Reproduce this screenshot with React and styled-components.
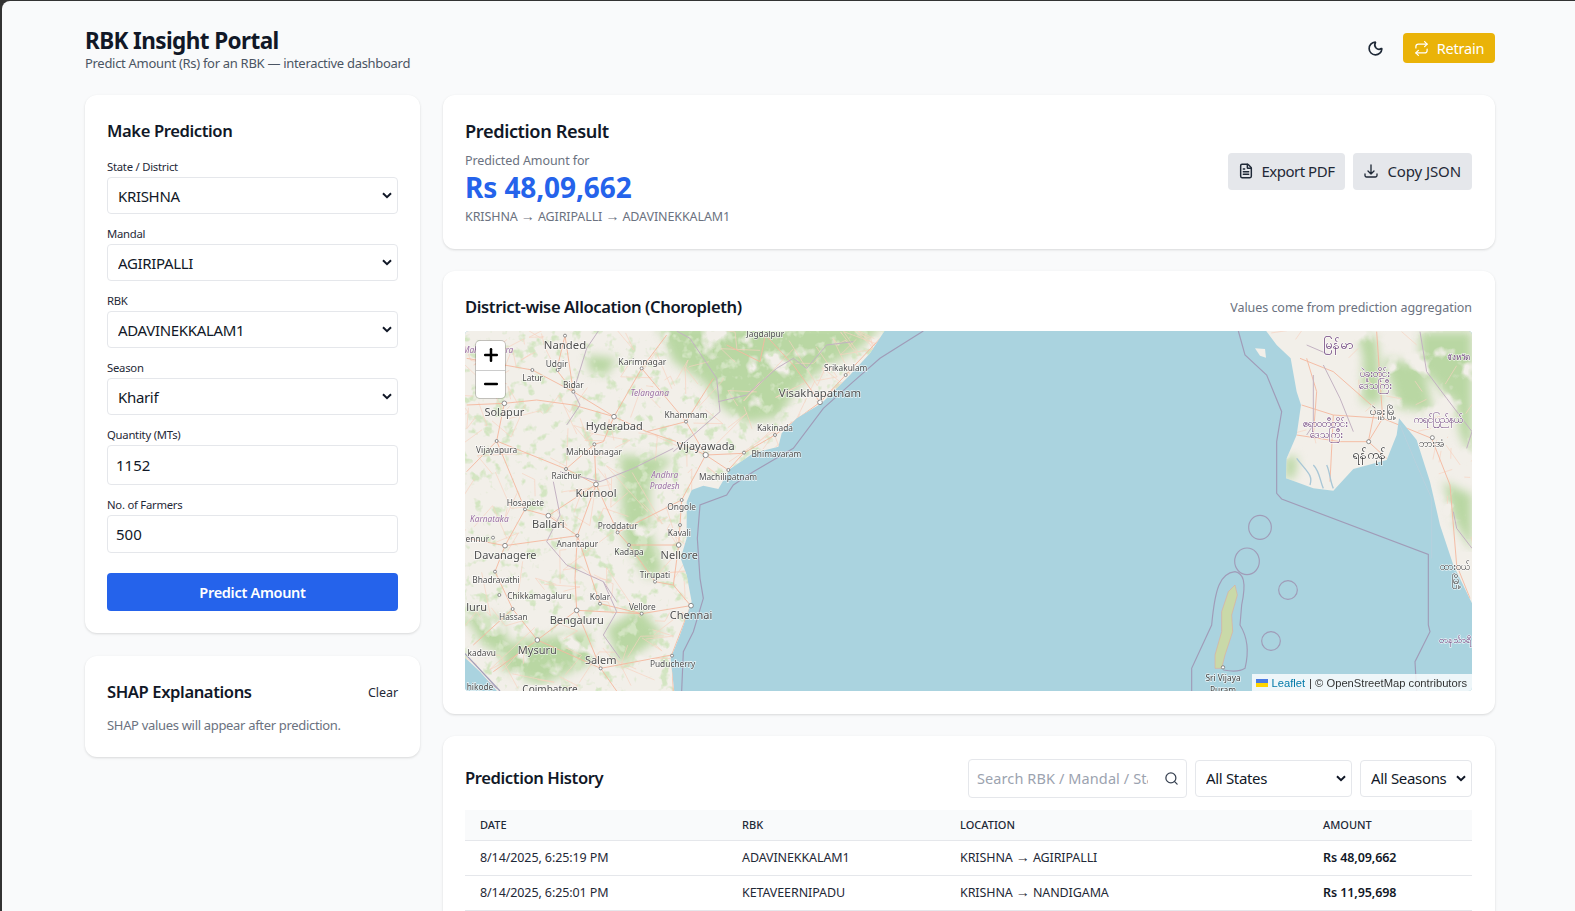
import React from "react";
import styled, { createGlobalStyle } from "styled-components";
import { Moon, FileText, Search, Plus, Minus } from "lucide-react";
import { HiOutlineArrowDownTray } from "react-icons/hi2";
import { FiRepeat } from "react-icons/fi";

const Global = createGlobalStyle`
  html, body { margin: 0; height: 911px; overflow: hidden; background: #333; }
  * { box-sizing: border-box; }
  body { font-family: "Noto Sans", "Open Sans", sans-serif; color: #111827; }
`;
const Page = styled.div`
  margin: 1px 0 0 2px; height: 910px; overflow: hidden; background: #f9fafb;
  border-top-left-radius: 8px; padding: 0 80px 0 83px;
`;
const Header = styled.header`
  height: 94px; display: flex; align-items: flex-start; justify-content: space-between; padding-top: 25px;
`;
const Title = styled.h1`
  margin: 0; font-size: 22.5px; line-height: 29px; font-weight: 700; letter-spacing: -0.6px;
`;
const Subtitle = styled.p`
  margin: 0; font-size: 13px; line-height: 17px; color: #4b5563; letter-spacing: -0.3px;
`;
const HeaderActions = styled.div`
  display: flex; align-items: center; gap: 19px; padding-top: 7px;
  svg { display: block; }
`;
const RetrainButton = styled.button`
  display: flex; align-items: center; justify-content: center; gap: 8px; width: 92px; height: 30px; padding: 0;
  border: 0; border-radius: 4px; background: #eab308; color: #fff; font: 14.5px "Noto Sans", sans-serif; letter-spacing: -0.2px;
`;
const Columns = styled.div`display: grid; grid-template-columns: 335px 1fr; column-gap: 23px; align-items: start;`;
const Stack = styled.div`display: flex; flex-direction: column; gap: ${p => p.$gap}px;`;
const Card = styled.section`
  background: #fff; border-radius: 12px; box-shadow: 0 1px 3px rgba(0,0,0,.1), 0 1px 2px rgba(0,0,0,.04); padding: 22px;
`;
const WideCard = styled(Card)`padding-right: 23px;`;
const CardTitle = styled.h2`
  margin: 0 0 1px; font-size: ${p => p.$large ? "18.2px" : "16.6px"}; line-height: 27px; font-weight: 600;
  letter-spacing: -0.4px; color: #111827;
`;
const Form = styled.form`margin-top: 14px;`;
const Field = styled.div`margin-bottom: 11px;`;
const Label = styled.label`
  display: block; font-size: 11.3px; line-height: 18px; padding-bottom: 1px; color: #1f2937; letter-spacing: -0.25px;
`;
const chevron = "data:image/svg+xml,%3Csvg xmlns='http://www.w3.org/2000/svg' width='10' height='7' viewBox='0 0 10 7'%3E%3Cpath d='M1 1.2l4 4 4-4' fill='none' stroke='%23111827' stroke-width='2'/%3E%3C/svg%3E";
const Select = styled.select`
  display: block; width: ${p => p.$w || "100%"}; height: 37px; padding: 0 20px 0 10px; border: 1px solid #e5e7eb; border-radius: 4px;
  appearance: none; background: #fff url("${chevron}") no-repeat right 5px center;
  color: #111827; font: 15px "Noto Sans", sans-serif; letter-spacing: -0.33px;
`;
const Input = styled.input`
  display: block; width: 100%; height: ${p => p.$h}px; padding: 0 8px; border: 1px solid #e5e7eb; border-radius: 4px;
  background: #fff; color: #111827; font: 15px "Noto Sans", sans-serif;
`;
const PrimaryButton = styled.button`
  display: block; width: 100%; height: 38px; margin-top: 20px; border: 0; border-radius: 4px; background: #2563eb;
  color: #fff; font: 600 14.5px "Noto Sans", sans-serif; letter-spacing: -0.3px;
`;
const SpacedHead = styled.div`display: flex; align-items: center; justify-content: space-between;`;
const ClearLink = styled.span`font-size: 12.5px; color: #1f2937; letter-spacing: -0.05px;`;
const Muted = styled.p`margin: 10px 0 1px; font-size: 13px; line-height: 18px; color: #6b7280; letter-spacing: -0.32px;`;
const ResultRow = styled.div`display: flex; align-items: center; justify-content: space-between; height: 110px;`;
const SmallGray = styled.div`font-size: 12.5px; line-height: 18px; color: #6b7280; letter-spacing: -0.1px; margin-top: ${p => p.$mt || 0}px;`;
const Arrow = styled.span`font-family: "Liberation Sans", sans-serif; font-size: 14px; line-height: 0;`;
const Amount = styled.div`font-size: 28px; line-height: 34px; font-weight: 700; color: #2563eb; letter-spacing: -0.1px;`;
const Buttons = styled.div`display: flex; gap: 8px; margin-bottom: 2px;`;
const GrayButton = styled.button`
  display: flex; align-items: center; gap: 8px; height: 37px; padding: 0 11px 0 10px; border: 0; border-radius: 4px; background: #e5e7eb;
  color: #1f2937; font: 15px "Noto Sans", sans-serif; letter-spacing: ${p => p.$ls}px;
  svg { flex: none; }
`;
const MapNote = styled.span`font-size: 12.5px; color: #6b7280; letter-spacing: -0.05px;`;
const MapFrame = styled.div`
  position: relative; height: 360px; margin: 10px 0 1px; overflow: hidden; border-radius: 4px; background: #aad3df;
  svg.tiles { display: block; width: 100%; height: 100%; }
`;
const Zoom = styled.div`
  position: absolute; left: 11px; top: 10px; width: 29px; border-radius: 4px; background: #fff; overflow: hidden;
  box-shadow: 0 0 0 1px rgba(0,0,0,.2);
`;
const ZoomBtn = styled.div`
  display: flex; align-items: center; justify-content: center; height: 28.5px; color: #000;
  & + & { border-top: 1px solid #ccc; }
`;
const Attribution = styled.div`
  position: absolute; right: 0; bottom: 0; height: 17px; padding: 0 5px 0 4px; display: flex; align-items: center; gap: 4px;
  background: rgba(255,255,255,.8); color: #333; font: 11.2px "Liberation Sans", sans-serif;
  a { color: #0078a8; text-decoration: none; }
`;
const Flag = styled.span`
  display: inline-block; width: 12px; height: 8px; background: linear-gradient(#4c7be1 50%, #ffd500 50%);
`;
const HistoryHead = styled.div`display: flex; align-items: center; justify-content: space-between; height: 40px; margin-bottom: 12px;`;
const Filters = styled.div`display: flex; align-items: center; gap: 8px;`;
const SearchBox = styled.div`
  position: relative; width: 219px; height: 39px;
  svg { position: absolute; right: 8px; top: 12px; }
`;
const SearchInput = styled.input`
  width: 100%; height: 100%; padding: 0 38px 0 8px; border: 1px solid #e5e7eb; border-radius: 4px; background: #fff;
  font: 14.5px "Noto Sans", sans-serif; letter-spacing: 0.1px; color: #111827;
  &::placeholder { color: #9ca3af; opacity: 1; }
`;
const Table = styled.table`width: 100%; border-collapse: collapse; table-layout: fixed; font-size: 12.5px; color: #1f2937;`;
const Th = styled.th`
  width: ${p => p.$w}; height: 30px; padding: 0 15px; background: #f9fafb; border-bottom: 1px solid #e5e7eb;
  text-align: left; font-size: 11px; font-weight: 500; text-transform: uppercase; letter-spacing: 0; color: #1f2937;
`;
const Td = styled.td`
  height: 35px; padding: 0 15px; border-bottom: 1px solid #e5e7eb; white-space: nowrap; letter-spacing: -0.1px;
  font-weight: ${p => p.$strong ? 600 : 400}; color: ${p => p.$strong ? "#111827" : "#1f2937"};
`;

/* ---- map drawing: coordinates are in 3x map pixels ---- */
const indiaLand = "M-20,-20 L1285,0 L1230,85 L1170,150 L1085,235 L1010,280 L965,325 L955,365 L880,385 L810,432 L775,492 L730,482 L695,495 L680,530 L680,640 L662,700 L680,750 L695,830 L660,930 L632,1000 L645,1120 L130,1120 L60,1040 L-20,965 Z";
const myanmarLand = "M470,-20 L530,60 L572,100 L590,200 L603,240 L590,330 L560,400 L558,460 L640,490 L700,497 L760,432 L860,405 L890,330 L897,280 L950,345 L990,470 L1020,600 L1060,720 L1116,835 L1140,835 L1140,-20 Z";
const indiaGreen = [
  "M590,0 L1270,0 L1200,70 L1100,125 L1010,190 L960,275 L860,295 L790,250 L730,170 L640,110 Z",
  "M480,390 L640,400 L570,470 L570,620 L610,740 L560,760 L490,640 Z",
  "M380,90 L470,100 L440,150 L390,140 Z",
  "M160,950 L380,920 L400,1010 L240,1080 L120,1030 Z",
  "M0,850 L120,880 L170,1010 L70,960 Z",
  "M440,910 L540,850 L610,930 L480,1020 Z",
];
const myanmarGreen = [
  "M770,20 L830,40 L845,235 L785,235 L790,100 Z",
  "M960,20 L1116,20 L1116,250 L1040,215 L960,120 Z",
  "M850,100 L970,120 L1000,260 L895,250 Z",
  "M555,395 L592,395 L585,455 L555,465 Z",
  "M1030,470 L1116,510 L1116,680 L1060,580 Z",
  "M1040,60 L1116,60 L1116,400 L1080,330 Z",
];
const indiaRoads = [
  "M462,275 L340,240 L230,225 L133,235 L20,240",
  "M462,275 L560,320 L650,350 L737,390",
  "M462,275 L430,350 L403,358 L408,478",
  "M408,478 L352,632 L345,760 L350,856",
  "M737,390 L665,525 L656,660 L640,780 L692,842",
  "M737,390 L850,385 L945,330 L1080,232 L1157,150 L1270,30",
  "M350,856 L232,945 L100,1040",
  "M350,856 L422,1030 L470,1098",
  "M350,856 L545,866 L692,842",
  "M692,842 L635,990 L640,1098",
  "M133,235 L110,348 L195,553 L135,662 L105,740 L158,852 L232,945",
  "M462,275 L340,200 L315,32",
  "M462,275 L545,130 L620,30",
  "M678,290 L737,390", "M678,290 L560,320", "M678,290 L760,160",
  "M408,478 L318,432 L403,358",
  "M408,478 L265,572 L195,553",
  "M408,478 L473,622 L507,660 L656,660",
  "M473,622 L665,525",
  "M507,660 L585,770 L640,780",
  "M352,632 L265,572", "M352,632 L420,836 L545,866",
  "M110,348 L318,432", "M20,440 L110,348",
  "M20,640 L135,662 L352,632",
  "M40,960 L158,852",
  "M232,945 L422,1030 L635,990",
  "M545,130 L678,290",
  "M217,135 L340,200 L290,135 L315,32",
  "M20,100 L217,135",
  "M916,30 L900,110 L800,60", "M916,30 L1000,120 L1080,232", "M850,385 L805,435 L737,390",
];
const myanmarRoads = [
  "M605,240 L700,270 L848,280 L805,350", "M600,100 L700,140 L825,250 L805,350",
  "M830,20 L848,280", "M590,330 L720,350 L805,350 L860,400",
  "M848,280 L995,340 L1050,480 L1070,720 L1110,820",
  "M620,100 L650,200 L640,330", "M700,270 L690,470",
];
const indiaBorders = [
  "M280,470 L300,570 L260,650 L320,720 L430,770 L470,830",
  "M320,300 L360,240 L340,200 L380,70 L415,18",
  "M640,380 L700,330 L780,260 L770,160 L690,40 L650,18",
  "M775,230 L860,210 L950,130 L1000,100 L1040,130 L1100,60 L1180,50",
  "M0,1000 L110,1090", "M300,440 L420,470 L520,430 L640,370",
  "M430,770 L470,860 L430,930 L480,1000",
];
const myanmarBorders = [
  "M670,120 L720,220 L760,320", "M640,150 L640,300 L620,330",
  "M960,20 L980,140 L1040,220 L1116,320 L1100,370",
  "M1060,560 L1070,610 L1116,670", "M620,60 L690,90",
];
const maritime = "M1390,18 L1260,100 L1180,170 L1090,250 L1000,370 L880,440 L820,480 L800,510 L720,540 L712,640 L720,760 L730,820 L700,920 L670,980 L665,1098";
const maritime2 = "M415,18 L435,90 L500,150 L545,260 L530,350 L530,505 L545,522 L985,688 L985,900 L990,920 L945,1010 L950,1098";
const andamanRing = "M405,740 C360,745 345,790 335,900 L275,1030 L275,1098 M405,740 C430,745 440,770 425,840 L420,900 C445,940 445,990 435,1030 C420,1040 395,1040 370,1035";

const indiaLabels = [
  ["Nanded",315,60,34],["Udgir",290,116,25],["Karimnagar",547,110,26],["Latur",218,158,25],["Bidar",340,180,25],
  ["Solapur",133,262,33],["Srikakulam",1157,128,25],["Visakhapatnam",1080,205,34],["Khammam",678,270,25],["Hyderabad",463,303,33],
  ["Kakinada",945,310,25],["Vijayawada",737,363,33],["Bhimavaram",949,386,25],["Vijayapura",110,376,25],["Mahbubnagar",402,382,25],
  ["Raichur",319,452,25],["Machilipatnam",804,456,25],["Kurnool",408,505,33],["Hosapete",196,534,25],["Ongole",665,546,25],
  ["Ballari",265,598,33],["Proddatur",473,602,25],["Kavali",658,623,25],["Anantapur",352,656,25],["Kadapa",507,682,25],
  ["Davanagere",136,689,33],["Nellore",658,689,33],["Tirupati",585,750,25],["Bhadravathi",108,765,25],["Chikkamagaluru",238,813,25],
  ["Kolar",420,815,25],["Vellore",547,845,25],["Chennai",693,871,33],["Hassan",160,875,25],["Bengaluru",350,885,33],
  ["Mysuru",232,974,33],["Salem",422,1005,33],["Puducherry",638,1017,25],["Coimbatore",270,1092,30],["Jagdalpur",916,26,25],
];
const indiaCutLabels = [["luru",50,845,33],["kadavu",65,983,25],["hikode",60,1085,25],["ennur",52,642,25]];
const stateLabels = [["Telangana",569,206],["Andhra",614,452],["Pradesh",614,485],["Karnataka",88,583],["Mah",32,76],["ra",148,76]];
const dots = [[315,32],[217,135],[293,135],[545,130],[340,200],[133,235,7],[462,275,7],[678,290],[945,330],[403,358],[737,390,8],[852,383],[110,348],[318,432],[805,435],[408,478,7],[665,525],[265,572,7],[195,553],[660,600],[473,622],[352,632],[507,660],[656,660,7],[135,662,7],[105,740],[118,810],[420,836],[693,842,7],[350,856,7],[158,852],[545,866],[232,945,7],[422,1030],[585,770],[1157,150],[1080,232,7],[636,992],[99,638]];

const myanmarLabels = [
  ["မြန်မာ",716,60,38,"#6b3f7a"],["ပဲခူးတိုင်း",825,145,30,"#6b3f7a"],["ဒေသကြီး",825,180,30,"#6b3f7a"],["ပဲခူးမြို့",848,258,34,"#444"],
  ["ကရင်ပြည်နယ်",1015,282,30,"#6b3f7a"],["ဧရာဝတီတိုင်း",676,294,30,"#6b3f7a"],["ဒေသကြီး",678,328,30,"#6b3f7a"],["ရန်ကုန်",808,388,38,"#333"],
  ["ဘားအံ",995,354,31,"#444"],["ထားဝယ်",1065,725,30,"#444"],["မြို့",1068,765,34,"#444"],["တနင်္သာရီ",1066,943,28,"#6b3f7a"],
  ["จังหวัด",1074,98,24,"#6b3f7a"],["Sri Vijaya",369,1058,25,"#444"],["Puram",369,1094,25,"#444"],
];
const rings = [[480,607,34,36],[441,709,37,40],[564,795,28,28],[513,948,28,28]];
const andaman = "M405,780 L412,810 L395,870 L398,920 L375,990 L365,1030 L345,1030 L345,990 L365,920 L365,860 L385,800 Z";

function seeded(n, seed, fn) {
  let s = seed; const out = [];
  const r = () => (s = (s * 16807) % 2147483647) / 2147483647;
  for (let i = 0; i < n; i++) out.push(fn(r, i));
  return out;
}
const minorRoads = seeded(190, 7, (r) => {
  const x = r() * 1250, y = r() * 1098;
  return `M${x},${y} L${x + (r() - .5) * 130},${y + (r() - .5) * 130} L${x + (r() - .5) * 220},${y + (r() - .5) * 220}`;
});
const minorRoadsM = seeded(45, 11, (r) => {
  const x = 560 + r() * 560, y = r() * 830;
  return `M${x},${y} L${x + (r() - .5) * 100},${y + (r() - .5) * 120}`;
});

const Mottle = ({ id, freq, seed, offset }) => (
  <filter id={id} x="0" y="0" width="100%" height="100%" colorInterpolationFilters="sRGB">
    <feGaussianBlur in="SourceGraphic" stdDeviation="14" result="src" />
    <feTurbulence type="fractalNoise" baseFrequency={freq} numOctaves="3" seed={seed} result="n" />
    <feColorMatrix in="n" type="matrix" values={`0 0 0 0 0  0 0 0 0 0  0 0 0 0 0  6 0 0 0 ${offset}`} result="a" />
    <feComposite in="src" in2="a" operator="in" />
  </filter>
);

const MapSvg = () => (
  <svg className="tiles" viewBox="0 0 3021 1080" preserveAspectRatio="none">
    <defs>
      <Mottle id="forest" freq="0.014" seed="4" offset="-1.6" />
      <Mottle id="scatter" freq="0.03" seed="9" offset="-3.4" />
      <filter id="tile"><feGaussianBlur stdDeviation="1.3" /></filter>
      <clipPath id="landI"><path d={indiaLand} /></clipPath>
      <clipPath id="landM"><path d={myanmarLand} /></clipPath>
    </defs>
    <rect width="3021" height="1080" fill="#aad3df" />
    <g filter="url(#tile)" fontFamily="'Noto Sans', sans-serif" textAnchor="middle">
      <g transform="translate(-15 -18)">
        <path d={indiaLand} fill="#f2efe9" />
        <g clipPath="url(#landI)">
          <g fill="#b9d7a3" filter="url(#forest)">{indiaGreen.map((d, i) => <path key={i} d={d} />)}</g>
          <rect x="-20" y="-20" width="1320" height="1140" fill="#d3e5c2" filter="url(#scatter)" />
          <g fill="none" stroke="#f7d2bf" strokeWidth="2">{minorRoads.map((d, i) => <path key={i} d={d} />)}</g>
          <g fill="none" stroke="#f4b9a0" strokeWidth="2.8">{indiaRoads.map((d, i) => <path key={i} d={d} />)}</g>
          <g fill="none" stroke="#c3b2c2" strokeWidth="3">{indiaBorders.map((d, i) => <path key={i} d={d} />)}</g>
        </g>
        <path d={maritime} fill="none" stroke="#a09cb8" strokeWidth="3.5" />
        <path d="M0,970 L120,1098" fill="none" stroke="#a09cb8" strokeWidth="3.5" />
        <g fill="#fff" stroke="#777" strokeWidth="2.5">{dots.map(([x, y, r], i) => <circle key={i} cx={x} cy={y} r={r || 4.5} />)}</g>
        <g fill="#4f4f4f" stroke="#fff" strokeOpacity=".75" strokeWidth="4" style={{ paintOrder: "stroke" }}>
          {indiaLabels.map(([t, x, y, s]) => <text key={t} x={x} y={y + s * .35} fontSize={s}>{t}</text>)}
          {indiaCutLabels.map(([t, x, y, s]) => <text key={t} x={x} y={y + s * .35} fontSize={s}>{t}</text>)}
        </g>
        <g fill="#9a6fa3" fontStyle="italic" fontSize="25" stroke="#fff" strokeOpacity=".6" strokeWidth="3" style={{ paintOrder: "stroke" }}>
          {stateLabels.map(([t, x, y]) => <text key={t} x={x} y={y + 8}>{t}</text>)}
        </g>
      </g>
      <g transform="translate(1905 -18)">
        <path d={myanmarLand} fill="#f2efe9" />
        <path d="M465,70 L495,72 L498,98 L480,92 Z" fill="#f2efe9" />
        <g clipPath="url(#landM)">
          <g fill="#b9d7a3" filter="url(#forest)">{myanmarGreen.map((d, i) => <path key={i} d={d} />)}</g>
          <g fill="none" stroke="#f7d2bf" strokeWidth="2">{minorRoadsM.map((d, i) => <path key={i} d={d} />)}</g>
          <g fill="none" stroke="#f4b9a0" strokeWidth="2.8">{myanmarRoads.map((d, i) => <path key={i} d={d} />)}</g>
          <g fill="none" stroke="#c3b2c2" strokeWidth="3">{myanmarBorders.map((d, i) => <path key={i} d={d} />)}</g>
          <path d="M590,400 C620,440 640,450 630,480 M640,420 C660,440 660,470 670,490 M680,420 C690,440 690,470 700,490" fill="none" stroke="#a8c6d6" strokeWidth="4" />
        </g>
        <path d={andaman} fill="#c9d9a8" stroke="#e8a090" strokeWidth="1.5" />
        <g fill="none" stroke="#a09cb8" strokeWidth="3.5">
          <path d={maritime2} />
          <path d={andamanRing} />
          {rings.map(([x, y, a, b], i) => <ellipse key={i} cx={x} cy={y} rx={a} ry={b} />)}
        </g>
        <path d="M900,300 L950,420 L995,520 L995,700" fill="none" stroke="#bcd0dc" strokeWidth="2" />
        <circle cx="806" cy="350" r="6" fill="#fff" stroke="#777" strokeWidth="2.5" />
        <circle cx="848" cy="280" r="4" fill="#fff" stroke="#777" strokeWidth="2.5" />
        <circle cx="997" cy="338" r="6" fill="#fff" stroke="#777" strokeWidth="2.5" />
        <circle cx="369" cy="1027" r="5" fill="#fff" stroke="#777" strokeWidth="2.5" />
        <g stroke="#fff" strokeOpacity=".75" strokeWidth="4" style={{ paintOrder: "stroke" }}>
          {myanmarLabels.map(([t, x, y, s, c], i) => <text key={i} x={x} y={y + s * .35} fontSize={s} fill={c}>{t}</text>)}
        </g>
      </g>
    </g>
  </svg>
);

const rows = [
  ["8/14/2025, 6:25:19 PM", "ADAVINEKKALAM1", "AGIRIPALLI", "Rs 48,09,662"],
  ["8/14/2025, 6:25:01 PM", "KETAVEERNIPADU", "NANDIGAMA", "Rs 11,95,698"],
];

export default function App() {
  return (
    <Page>
      <Global />
      <Header>
        <div>
          <Title>RBK Insight Portal</Title>
          <Subtitle>Predict Amount (Rs) for an RBK — interactive dashboard</Subtitle>
        </div>
        <HeaderActions>
          <Moon size={17} color="#1f2937" strokeWidth={2.3} />
          <RetrainButton><FiRepeat size={15} />Retrain</RetrainButton>
        </HeaderActions>
      </Header>
      <Columns>
        <Stack $gap={23}>
          <Card>
            <CardTitle>Make Prediction</CardTitle>
            <Form>
              <Field><Label>State / District</Label><Select defaultValue="KRISHNA"><option>KRISHNA</option></Select></Field>
              <Field><Label>Mandal</Label><Select defaultValue="AGIRIPALLI"><option>AGIRIPALLI</option></Select></Field>
              <Field><Label>RBK</Label><Select defaultValue="ADAVINEKKALAM1"><option>ADAVINEKKALAM1</option></Select></Field>
              <Field><Label>Season</Label><Select defaultValue="Kharif"><option>Kharif</option></Select></Field>
              <Field><Label>Quantity (MTs)</Label><Input $h={40} defaultValue="1152" /></Field>
              <Field><Label>No. of Farmers</Label><Input $h={38} defaultValue="500" /></Field>
              <PrimaryButton type="button">Predict Amount</PrimaryButton>
            </Form>
          </Card>
          <Card>
            <SpacedHead><CardTitle>SHAP Explanations</CardTitle><ClearLink>Clear</ClearLink></SpacedHead>
            <Muted>SHAP values will appear after prediction.</Muted>
          </Card>
        </Stack>
        <Stack $gap={22}>
          <WideCard>
            <ResultRow>
              <div>
                <CardTitle $large>Prediction Result</CardTitle>
                <SmallGray $mt={7}>Predicted Amount for</SmallGray>
                <Amount>Rs 48,09,662</Amount>
                <SmallGray $mt={4}>KRISHNA <Arrow>→</Arrow> AGIRIPALLI <Arrow>→</Arrow> ADAVINEKKALAM1</SmallGray>
              </div>
              <Buttons>
                <GrayButton $ls={-0.5}><FileText size={16} strokeWidth={2.2} />Export PDF</GrayButton>
                <GrayButton $ls={-0.1}><HiOutlineArrowDownTray size={16} strokeWidth={2} />Copy JSON</GrayButton>
              </Buttons>
            </ResultRow>
          </WideCard>
          <WideCard>
            <SpacedHead><CardTitle>District-wise Allocation (Choropleth)</CardTitle><MapNote>Values come from prediction aggregation</MapNote></SpacedHead>
            <MapFrame>
              <MapSvg />
              <Zoom>
                <ZoomBtn><Plus size={20} strokeWidth={3} /></ZoomBtn>
                <ZoomBtn><Minus size={20} strokeWidth={3} /></ZoomBtn>
              </Zoom>
              <Attribution><Flag /><a>Leaflet</a><span>| © OpenStreetMap contributors</span></Attribution>
            </MapFrame>
          </WideCard>
          <WideCard>
            <HistoryHead>
              <CardTitle>Prediction History</CardTitle>
              <Filters>
                <SearchBox>
                  <SearchInput placeholder="Search RBK / Mandal / State" />
                  <Search size={15} color="#374151" />
                </SearchBox>
                <Select $w="157px" defaultValue="All States"><option>All States</option></Select>
                <Select $w="112px" defaultValue="All Seasons"><option>All Seasons</option></Select>
              </Filters>
            </HistoryHead>
            <Table>
              <thead>
                <tr><Th $w="262px">Date</Th><Th $w="218px">RBK</Th><Th $w="363px">Location</Th><Th $w="164px">Amount</Th></tr>
              </thead>
              <tbody>
                {rows.map((r) => (
                  <tr key={r[0]}><Td>{r[0]}</Td><Td>{r[1]}</Td><Td>KRISHNA <Arrow>→</Arrow> {r[2]}</Td><Td $strong>{r[3]}</Td></tr>
                ))}
              </tbody>
            </Table>
          </WideCard>
        </Stack>
      </Columns>
    </Page>
  );
}
